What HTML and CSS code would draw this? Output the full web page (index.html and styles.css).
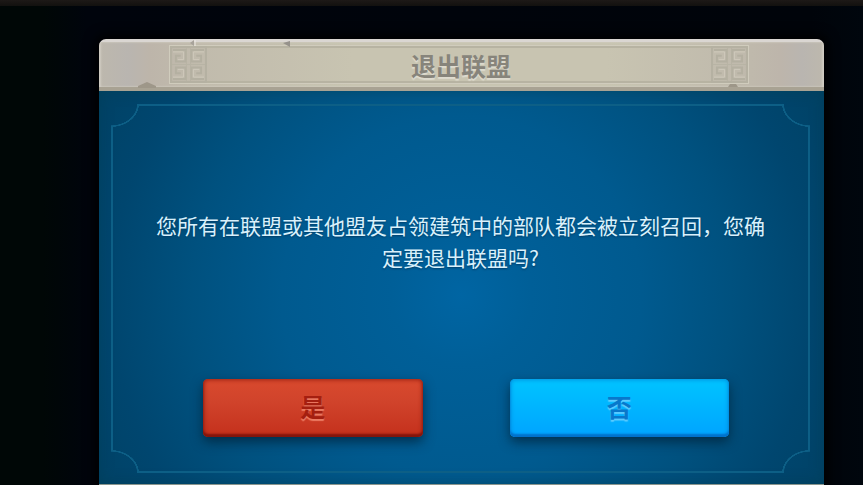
FILE: index.html
```html
<!DOCTYPE html>
<html lang="zh-CN">
<head>
    <meta charset="UTF-8">
    <meta name="viewport" content="width=device-width, initial-scale=1.0">
    <title>退出联盟</title>
    <link rel="stylesheet" href="styles.css">
</head>
<body>
    <svg class="defs" aria-hidden="true">
        <symbol id="curl" viewBox="0 0 16 16">
            <path d="M1 2H14V14H4V8H9" fill="none" stroke="#b4b0a1" stroke-width="2"/>
            <path d="M1 4H12V12H6" fill="none" stroke="#cfcabb" stroke-width="1"/>
        </symbol>
        <symbol id="knot" viewBox="0 0 36 36">
            <rect x="1" y="1" width="34" height="34" fill="none" stroke="#b5b1a2" stroke-width="2"/>
            <path d="M16 2V34M20 2V34M2 18H34" fill="none" stroke="#b8b4a5" stroke-width="1"/>
            <use href="#curl" x="2" y="2" width="15" height="15"/>
            <use href="#curl" x="2" y="2" width="15" height="15" transform="translate(36 0) scale(-1 1)"/>
            <use href="#curl" x="2" y="2" width="15" height="15" transform="translate(0 36) scale(1 -1)"/>
            <use href="#curl" x="2" y="2" width="15" height="15" transform="translate(36 36) scale(-1 -1)"/>
        </symbol>
    </svg>
    <div class="topbar"></div>
    <main class="dialog" role="dialog" aria-labelledby="title">
        <header class="header">
            <svg class="chip chip-a" viewBox="0 0 6 6"><path d="M0 3L4 0V6Z" fill="#a7a29a"/><path d="M5 0V6" stroke="#eeeae5"/></svg>
            <svg class="chip chip-b" viewBox="0 0 8 6"><path d="M0 2L7 0V6Z" fill="#96928b"/></svg>
            <svg class="chip chip-c" viewBox="0 0 18 6"><path d="M0 6V4L9 0L18 4V6Z" fill="#9e9789"/></svg>
            <svg class="chip chip-d" viewBox="0 0 10 3"><path d="M0 3L2 0H8L10 3Z" fill="#9e9789"/></svg>
            <div class="banner">
                <svg class="knot"><use href="#knot"/></svg>
                <h1 id="title">退出联盟</h1>
                <svg class="knot"><use href="#knot"/></svg>
            </div>
        </header>
        <section class="content">
            <div class="frame">
                <p class="message">您所有在联盟或其他盟友占领建筑中的部队都会被立刻召回，您确定要退出联盟吗?</p>
                <div class="actions">
                    <button class="btn btn-yes" type="button">是</button>
                    <button class="btn btn-no" type="button">否</button>
                </div>
            </div>
        </section>
    </main>
</body>
</html>
```

FILE: styles.css
```css
* {
    box-sizing: border-box;
}

body {
    margin: 0;
    min-height: 100vh;
    display: flex;
    flex-direction: column;
    font-family: "Noto Sans CJK SC", sans-serif;
    background: linear-gradient(to right, #000706, #000706 5%, #00040c 10%, #00040a 94%, #00060d);
}

.defs {
    position: absolute;
    width: 0;
    height: 0;
}

.topbar {
    height: 6px;
    background: linear-gradient(#1d1917, #12110f);
}

.dialog {
    flex: 1;
    display: flex;
    flex-direction: column;
    margin: 33px 39px 0 99px;
    border-radius: 7px 7px 0 0;
    border-bottom: 1px solid #8a958d;
    overflow: hidden;
    box-shadow: 0 0 12px 4px #000;
}

/* stone title bar */
.header {
    position: relative;
    padding: 4px 76px 4px 71px;
    border-top: 3px solid #dad6d2;
    border-bottom: 4px solid #a8a293;
    background: linear-gradient(to right, #bdb8ad, #b9b5b0 4%, #bdb5aa 7%, #c0baac 12%, #c8c4b1 35%, #c8c4b1 70%, #bfb9ac 90%, #bdb5ab 94%, #b9b5b0 97%, #bdb8ad);
    box-shadow: inset 2px 0 2px #d0ccc3, inset -2px 0 2px #d0ccc3;
}

.banner {
    display: flex;
    justify-content: space-between;
    align-items: center;
    outline: 1px solid #d0ccbd;
    box-shadow: inset 0 2px #b7b3a2, inset 0 -2px #b7b3a2;
}

.knot {
    width: 37px;
    height: 37px;
}

h1 {
    margin: 0;
    padding-left: 4px;
    font-size: 25px;
    line-height: 36px;
    font-weight: bold;
    color: #87847b;
    text-shadow: 0 2px 1px #dedbcf;
}

.chip {
    position: absolute;
}

.chip-a {
    left: 91px;
    top: -2px;
    width: 6px;
    height: 6px;
}

.chip-b {
    left: 184px;
    top: -1px;
    width: 8px;
    height: 6px;
}

.chip-c {
    left: 39px;
    bottom: -1px;
    width: 18px;
    height: 6px;
}

.chip-d {
    right: 86px;
    bottom: 0;
    width: 10px;
    height: 3px;
}

.content {
    flex: 1;
    display: flex;
    padding: 13px 14px 11px 12px;
    background: radial-gradient(circle at 50% 52%, #0065a3 0, #005f98 70px, #005a8f 180px, #00517f 270px, #00466f 350px, #004163 430px);
    box-shadow: inset 0 0 14px rgba(0, 62, 85, 0.6);
}

/* thin outline with scooped corners */
.frame {
    --line: #0d5f86;
    --scoop: transparent 92%, var(--line) 94%, var(--line) 99%, transparent;
    flex: 1;
    display: flex;
    flex-direction: column;
    justify-content: space-between;
    padding: 105px 81px 36px 92px;
    background:
        radial-gradient(28px 23px at 0 0, var(--scoop)) left top / 28px 23px,
        radial-gradient(28px 23px at 100% 0, var(--scoop)) right top / 28px 23px,
        radial-gradient(28px 23px at 0 100%, var(--scoop)) left bottom / 28px 23px,
        radial-gradient(28px 23px at 100% 100%, var(--scoop)) right bottom / 28px 23px,
        linear-gradient(var(--line), var(--line)) center top / calc(100% - 54px) 2px,
        linear-gradient(var(--line), var(--line)) center bottom / calc(100% - 54px) 2px,
        linear-gradient(var(--line), var(--line)) left center / 2px calc(100% - 44px),
        linear-gradient(var(--line), var(--line)) right center / 2px calc(100% - 44px);
    background-repeat: no-repeat;
}

.message {
    margin: 0 -41px 0 -52px;
    padding: 0 5px;
    font-size: 21px;
    line-height: 32px;
    text-align: center;
    color: #d9f1fc;
    text-shadow: 0 1px 2px #003c66;
}

.actions {
    display: flex;
    gap: 87px;
}

.btn {
    flex: 1;
    height: 58px;
    padding: 0 0 4px;
    border: 0;
    border-radius: 5px;
    font-family: inherit;
    font-size: 25px;
    line-height: 36px;
    font-weight: bold;
    cursor: pointer;
}

.btn-yes {
    color: #a51f10;
    text-shadow: 0 2px 1px #ec7c64;
    background: linear-gradient(#d94a2e, #d0432b 40%, #c4301c);
    box-shadow: inset 0 -3px 2px #84150c, inset 0 0 4px 1px #9a2012, 0 5px 12px rgba(0, 30, 50, 0.7);
}

.btn-no {
    color: #0878cb;
    text-shadow: 0 2px 1px #5dccff;
    background: linear-gradient(#00c4ff, #00b4ff 50%, #00a4ff);
    box-shadow: inset 0 -3px 2px #0071cc, inset 0 0 4px 1px #008fe0, 0 5px 12px rgba(0, 30, 50, 0.7);
}
```
